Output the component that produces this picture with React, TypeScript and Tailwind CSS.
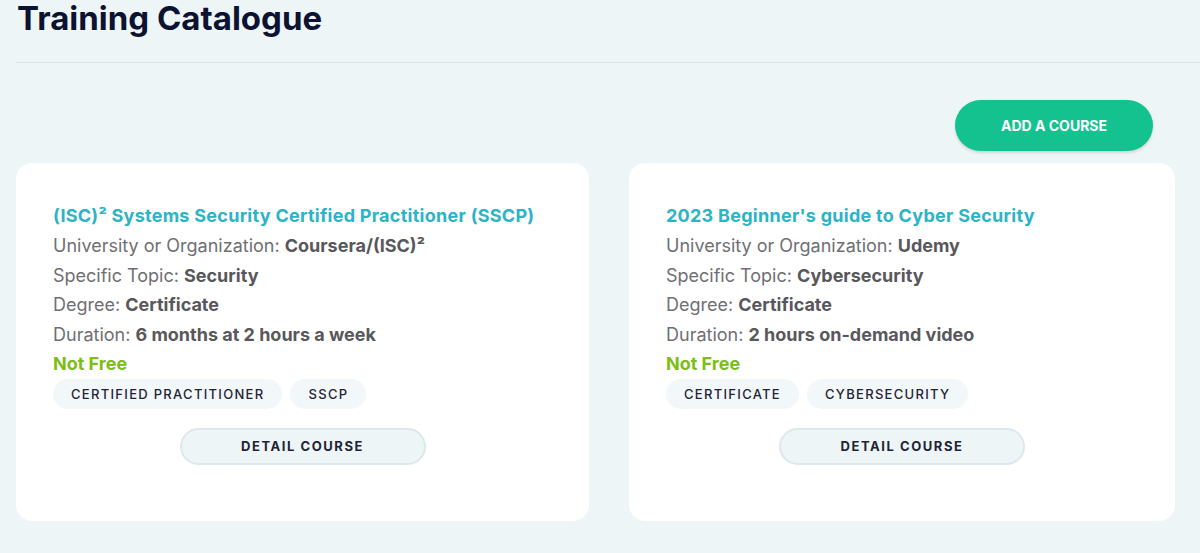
import React from "react";

type Course = {
  title: string;
  org: string;
  topic: string;
  degree: string;
  duration: string;
  price: string;
  tags: string[];
  width: string;
};

const courses: Course[] = [
  {
    title: "(ISC)² Systems Security Certified Practitioner (SSCP)",
    org: "Coursera/(ISC)²",
    topic: "Security",
    degree: "Certificate",
    duration: "6 months at 2 hours a week",
    price: "Not Free",
    tags: ["Certified Practitioner", "SSCP"],
    width: "w-[573px]",
  },
  {
    title: "2023 Beginner's guide to Cyber Security",
    org: "Udemy",
    topic: "Cybersecurity",
    degree: "Certificate",
    duration: "2 hours on-demand video",
    price: "Not Free",
    tags: ["Certificate", "Cybersecurity"],
    width: "w-[546px]",
  },
];

function Row({ label, value }: { label: string; value: string }) {
  return (
    <p className="text-[18px] leading-[29.6px] text-[#6f6f73]">
      {label}: <span className="font-bold text-[#58585c]">{value}</span>
    </p>
  );
}

function CourseCard({ course }: { course: Course }) {
  return (
    <div className={`${course.width} h-[358px] shrink-0 rounded-[16px] bg-white pl-[37px] pr-6 pt-[38px]`}>
      <h2 className="text-[18px] leading-[30px] font-bold tracking-[0.015em] text-[#2bb3c6]">{course.title}</h2>
      <Row label="University or Organization" value={course.org} />
      <Row label="Specific Topic" value={course.topic} />
      <Row label="Degree" value={course.degree} />
      <Row label="Duration" value={course.duration} />
      <p className="text-[18px] leading-[29.6px] font-bold text-[#7cbd17]">{course.price}</p>
      <div className="flex gap-2">
        {course.tags.map((t) => (
          <span
            key={t}
            className="h-[30px] rounded-full bg-[#f2f7f9] px-[18px] text-[13px] leading-[30px] font-medium uppercase tracking-[0.1em] text-[#1f2335]"
          >
            {t}
          </span>
        ))}
      </div>
      <div className="mt-[19px] flex justify-center pr-[13px]">
        <button className="h-[37px] w-[246px] rounded-full border-2 border-[#dde8ec] bg-[#eef5f7] text-[13px] font-bold uppercase tracking-[0.12em] text-[#1f2335]">
          Detail course
        </button>
      </div>
    </div>
  );
}

export default function App() {
  return (
    <div className="min-h-[553px] bg-[#eef5f7] pl-4 pb-8" style={{ fontFamily: "Inter, 'Noto Sans', sans-serif" }}>
      <h1 className="pl-px text-[33px] leading-[37px] font-bold text-[#0c1231]">
        Training Catalogue
      </h1>
      <div className="mt-[25px] h-px bg-[#d9e3e7]" />
      <div className="flex justify-end pr-[47px] pt-[37px]">
        <button className="h-[51px] w-[198px] rounded-full bg-[#14c28f] text-[14px] font-bold uppercase text-white shadow-[0_2px_3px_rgba(0,0,0,0.12)]">
          Add a course
        </button>
      </div>
      <div className="mt-3 flex gap-10">
        {courses.map((c) => (
          <CourseCard key={c.title} course={c} />
        ))}
      </div>
    </div>
  );
}
